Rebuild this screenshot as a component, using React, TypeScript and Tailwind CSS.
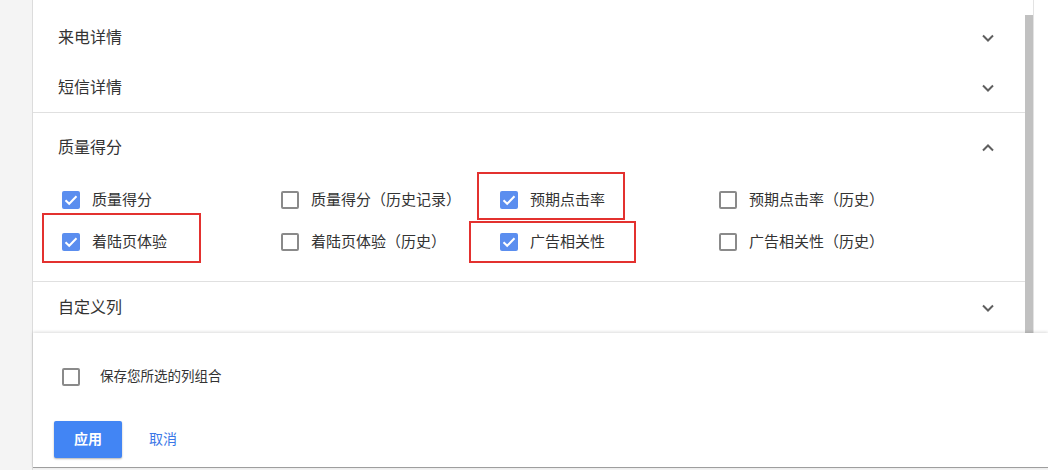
import { ReactNode } from 'react'

const FONT = { fontFamily: '"Liberation Sans", "Noto Sans CJK SC", sans-serif' }

// 质量得分 的列选项
const QUALITY = [
  { label: '质量得分', checked: true },
  { label: '质量得分（历史记录）', checked: false },
  { label: '预期点击率', checked: true },
  { label: '预期点击率（历史）', checked: false },
  { label: '着陆页体验', checked: true },
  { label: '着陆页体验（历史）', checked: false },
  { label: '广告相关性', checked: true },
  { label: '广告相关性（历史）', checked: false },
]

function Chevron({ up = false }: { up?: boolean }) {
  return (
    <svg width="14" height="14" viewBox="0 0 14 14" className="text-[#5f5f5f]">
      <path
        d={up ? 'M2 9.5 L7 4.5 L12 9.5' : 'M2 4.5 L7 9.5 L12 4.5'}
        fill="none"
        stroke="currentColor"
        strokeWidth="2"
      />
    </svg>
  )
}

function Box({ checked }: { checked: boolean }) {
  if (checked) {
    return (
      <span className="flex h-[18px] w-[18px] shrink-0 items-center justify-center rounded-[2px] bg-[#5b8eef]">
        <svg width="18" height="18" viewBox="0 0 18 18">
          <path d="M3.5 9.2 L7.2 12.8 L14.5 5.2" fill="none" stroke="#fff" strokeWidth="2" />
        </svg>
      </span>
    )
  }
  return <span className="h-[18px] w-[18px] shrink-0 rounded-[2px] border-2 border-[#8a8a8a] bg-white" />
}

function Row({ children }: { children: ReactNode }) {
  return (
    <div className="flex h-[50px] items-center justify-between pl-[25px] pr-[30px] pt-[2px] text-[16px] text-[#333]">
      <span>{children}</span>
      <Chevron />
    </div>
  )
}

function Mark({ className }: { className: string }) {
  return <div className={`pointer-events-none absolute border-2 border-[#e3312f] ${className}`} />
}

export default function App() {
  return (
    <div className="flex h-[470px] w-[1048px] overflow-hidden bg-[#f4f4f4]" style={FONT}>
      <div className="w-[33px] shrink-0 border-r border-[#dcdcdc] bg-[#f4f4f4]" />

      <div className="flex flex-1 flex-col">
        {/* scroll area */}
        <div className="flex h-[333px] bg-white">
          <div className="flex-1 pt-[12px]">
            <Row>来电详情</Row>
            <Row>短信详情</Row>

            <div className="relative border-y border-[#e0e0e0]">
              <div className="flex h-[65px] items-center justify-between pl-[25px] pr-[30px] pt-[5px] text-[16px] text-[#333]">
                <span>质量得分</span>
                <Chevron up />
              </div>
              <div className="grid grid-cols-[219px_219px_219px_219px] pb-[19px] pl-[29px]">
                {QUALITY.map((q, i) => (
                  <label key={i} className="flex h-[42px] items-center gap-[12px] pt-[2px] text-[15px] text-[#333]">
                    <Box checked={q.checked} />
                    <span>{q.label}</span>
                  </label>
                ))}
              </div>
              <Mark className="left-[444px] top-[59px] h-[48px] w-[148px]" />
              <Mark className="left-[9px] top-[100px] h-[50px] w-[159px]" />
              <Mark className="left-[436px] top-[108px] h-[42px] w-[167px]" />
            </div>

            <Row>自定义列</Row>
          </div>

          {/* scrollbar */}
          <div className="w-[8px] shrink-0 pt-[15px]">
            <div className="h-full bg-[#c1c1c1]" />
          </div>
          <div className="w-[15px] shrink-0 border-l border-[#e3e3e3] bg-white" />
        </div>

        {/* footer */}
        <div className="relative border-b border-[#9e9e9e] bg-white pb-[9px] pl-[21px] pt-[35px] shadow-[0_-1px_3px_rgba(0,0,0,0.14)]">
          <label className="ml-[8px] flex h-[18px] items-center gap-[20px] text-[13.5px] text-[#333]">
            <Box checked={false} />
            <span>保存您所选的列组合</span>
          </label>
          <div className="mt-[35px] flex items-center gap-[27px]">
            <button className="h-[37px] w-[68px] rounded-[2px] bg-[#4285f4] text-[14px] font-bold text-white shadow-[0_1px_2px_rgba(0,0,0,0.3)]">
              应用
            </button>
            <button className="text-[14px] text-[#3b78e7]">取消</button>
          </div>
        </div>
      </div>
    </div>
  )
}
